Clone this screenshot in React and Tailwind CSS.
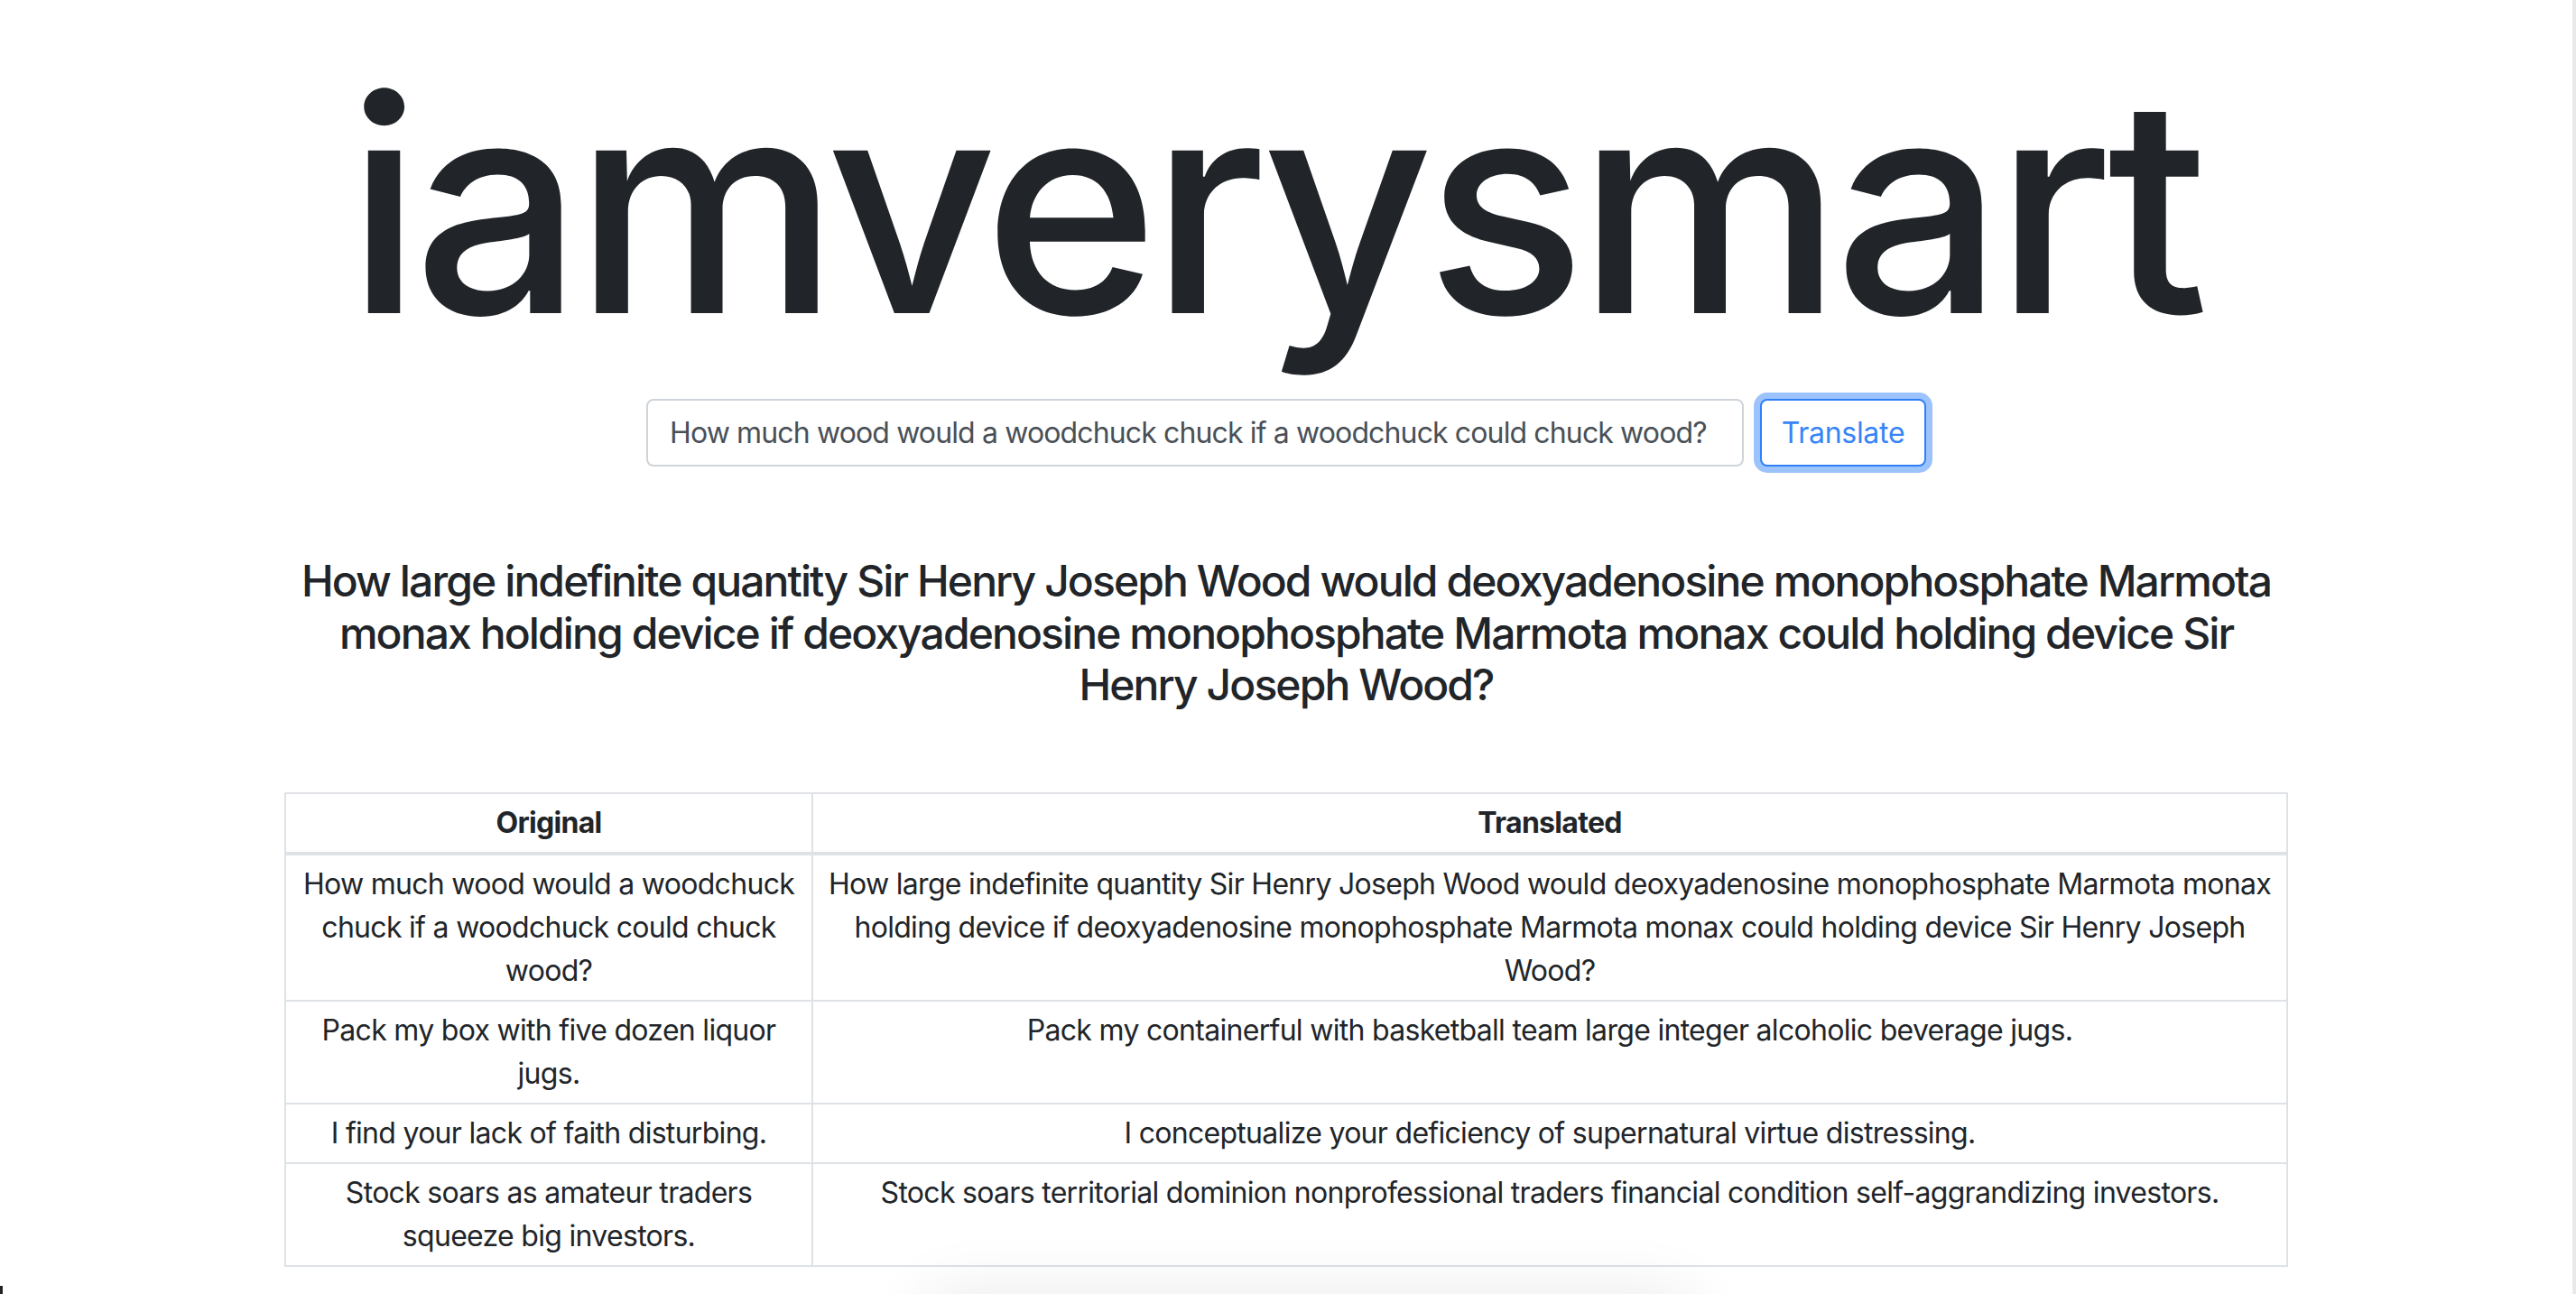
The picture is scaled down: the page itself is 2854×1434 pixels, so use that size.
import React from "react";

const rows = [
  [
    "How much wood would a woodchuck chuck if a woodchuck could chuck wood?",
    "How large indefinite quantity Sir Henry Joseph Wood would deoxyadenosine monophosphate Marmota monax holding device if deoxyadenosine monophosphate Marmota monax could holding device Sir Henry Joseph Wood?",
  ],
  [
    "Pack my box with five dozen liquor jugs.",
    "Pack my containerful with basketball team large integer alcoholic beverage jugs.",
  ],
  [
    "I find your lack of faith disturbing.",
    "I conceptualize your deficiency of supernatural virtue distressing.",
  ],
  [
    "Stock soars as amateur traders squeeze big investors.",
    "Stock soars territorial dominion nonprofessional traders financial condition self-aggrandizing investors.",
  ],
];

export default function App() {
  return (
    <div
      className="relative min-h-[1434px] h-[1434px] overflow-hidden bg-white text-[#212529] border-r-4 border-[#e9e9e9]"
      style={{ fontFamily: "Inter, 'Noto Sans', sans-serif" }}
    >
      <div className="mx-auto w-[2280px] px-[30px]">
        <h1 className="pt-[62px] pr-[28px] text-center text-[330px] leading-none font-medium tracking-[-9px] text-[#212529]">
          iamverysmart
        </h1>

        <div className="mt-[50px] flex justify-center items-center gap-[18px]">
          <input
            readOnly
            value="How much wood would a woodchuck chuck if a woodchuck could chuck wood?"
            className="w-[1216px] h-[75px] rounded-[8px] border-2 border-[#ced4da] bg-white px-[24px] text-[32px] tracking-[-0.87px] text-[#495057] outline-none"
          />
          <button className="h-[75px] w-[184px] rounded-[8px] border-2 border-[#2f7ff7] bg-white text-[32px] tracking-[-0.3px] text-[#3784f7] shadow-[0_0_0_7px_#9cc3fb]">
            Translate
          </button>
        </div>

        <h4 className="mt-[98px] text-center text-[48px] leading-[57.6px] font-medium tracking-[-1.9px] text-[#212529]">
          How large indefinite quantity Sir Henry Joseph Wood would deoxyadenosine monophosphate Marmota
          <br />
          monax holding device if deoxyadenosine monophosphate Marmota monax could holding device Sir
          <br />
          Henry Joseph Wood?
        </h4>

        <table className="mt-[90px] w-full border-collapse text-center text-[32px] leading-[48px] tracking-[-0.7px]">
          <thead>
            <tr>
              <th className="w-[584px] border-2 border-b-4 border-[#dee2e6] px-[10px] py-[8px] font-bold">
                Original
              </th>
              <th className="border-2 border-b-4 border-[#dee2e6] px-[10px] py-[8px] font-bold">
                Translated
              </th>
            </tr>
          </thead>
          <tbody>
            {rows.map((r, i) => (
              <tr key={i}>
                <td className="border-2 border-[#dee2e6] px-[10px] py-[8px] align-top">
                  {r[0]}
                </td>
                <td className="border-2 border-[#dee2e6] px-[10px] py-[8px] align-top">
                  {r[1]}
                </td>
              </tr>
            ))}
          </tbody>
        </table>
      </div>

      <div className="pointer-events-none absolute left-[1040px] top-[1450px] h-[100px] w-[820px] rounded-[20px] bg-white shadow-[0_0_70px_20px_rgba(0,0,0,0.08)]" />
      <div className="absolute left-0 bottom-0 h-[9px] w-[3px] bg-[#222]" />
    </div>
  );
}
